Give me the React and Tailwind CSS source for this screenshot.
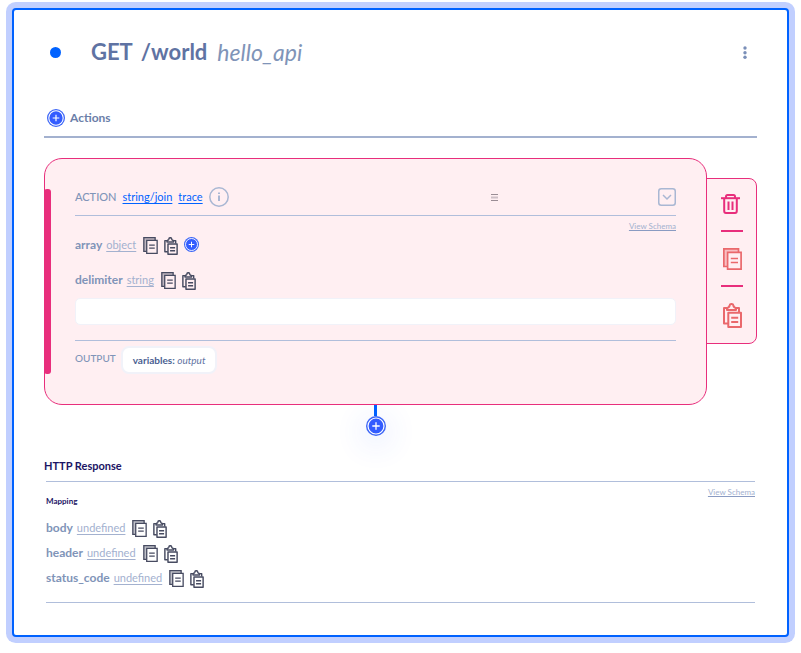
import React from "react";

function CopyIcon({ className }) {
  return (
    <svg viewBox="0 0 19 22" className={className} fill="none" stroke="currentColor" strokeWidth="1.700" aria-hidden="true">
      <path d="M4 18.500H1V1H15.500V4H4Z" fill="currentColor" fillOpacity="0.35" stroke="none" />
      <path d="M4 18.500H0.850V0.850H15.500V4" />
      <path d="M4.600 4.300H18.100V21.100H4.600Z" />
      <path d="M7.800 10.500H15M7.800 14.500H15" />
    </svg>
  );
}

function PasteIcon({ className }) {
  return (
    <svg viewBox="0 0 19 25" className={className} fill="none" stroke="currentColor" strokeWidth="2" strokeLinejoin="round" aria-hidden="true">
      <path d="M4 5H1V20.500H5M13 5H16V9" />
      <path d="M4 7V5.500C4 4.500 6.300 4.500 6.500 3C6.700 0.300 10.300 0.300 10.500 3C10.700 4.500 13 4.500 13 5.500V7Z" />
      <path d="M5.300 9.800H18V24H5.300Z" />
      <path d="M8.200 14.800H15.200M8.200 19H15.200" />
    </svg>
  );
}

function TrashIcon({ className }) {
  return (
    <svg viewBox="0 0 19 20" className={className} fill="none" stroke="currentColor" strokeWidth="2" aria-hidden="true">
      <path d="M0 4.200H19" />
      <path d="M5 4V2.500C5 1.500 5.500 1 6.500 1H12.500C13.500 1 14 1.500 14 2.500V4" />
      <path d="M3.200 4.200V17C3.200 18.300 4 19 5 19H14C15 19 15.800 18.300 15.800 17V4.200" />
      <path d="M7.500 7.500V16M11.500 7.500V16" />
    </svg>
  );
}

function PlusIcon({ className }) {
  return (
    <svg viewBox="0 0 20 20" className={className} aria-hidden="true">
      <circle cx="10" cy="10" r="10" fill="#3d66f6" />
      <circle cx="10" cy="10" r="8" fill="#335cff" stroke="#fff" strokeWidth="1.200" />
      <path d="M10 6.300V13.700M6.300 10H13.700" stroke="#fff" strokeWidth="1.300" />
    </svg>
  );
}

function CopyPaste({ name }) {
  return (
    <div className="ml-[3px] flex items-center gap-1.5 pt-0.5 text-[#474b61]">
      <button type="button" aria-label={`Copy ${name}`}>
        <CopyIcon className="h-[17px] w-[15px]" />
      </button>
      <button type="button" aria-label={`Paste ${name}`}>
        <PasteIcon className="h-[18px] w-[14px]" />
      </button>
    </div>
  );
}

function Field({ name, type, htmlFor, children }) {
  return (
    <div className="flex h-[25px] items-center gap-1 text-[11px] leading-4">
      {htmlFor ? (
        <label htmlFor={htmlFor} className="text-[12px] font-bold text-[#8094b8]">{name}</label>
      ) : (
        <span className="text-[12px] font-bold text-[#8094b8]">{name}</span>
      )}
      <a href="#type" className="text-[#a3b1cf] underline underline-offset-2 [text-decoration-skip-ink:none]">{type}</a>
      <CopyPaste name={name} />
      {children}
    </div>
  );
}

function ViewSchema() {
  return (
    <div className="flex h-5 items-center justify-end">
      <a href="#schema" className="text-[8px] leading-3 text-[#a3b1cf] underline decoration-[#8a9bc2] underline-offset-1 [text-decoration-skip-ink:none]">View Schema</a>
    </div>
  );
}

function ActionCard() {
  return (
    <section className="relative min-w-0 flex-1 rounded-[18px] border border-[#e82e7c] bg-[#ffeff2] px-[30px] pt-[27px] pb-[30px]">
      <div className="absolute top-[30px] bottom-[30px] -left-px w-[7px] rounded-[3px] bg-[#e82e7c]" />
      <header className="flex h-[30px] items-start border-b border-[#b0bedb]">
        <div className="flex h-[22px] flex-1 items-center gap-1.5 text-[11px] leading-4">
          <span className="font-medium text-[#8094b8]">ACTION</span>
          <a href="#join" className="text-[#0062ff] underline underline-offset-2 [text-decoration-skip-ink:none]">string/join</a>
          <a href="#trace" className="text-[#0062ff] underline underline-offset-2 [text-decoration-skip-ink:none]">trace</a>
          <button type="button" aria-label="Information">
            <svg viewBox="0 0 20 20" className="size-5" fill="none" stroke="#a9b7d3" strokeWidth="1.500" aria-hidden="true">
              <circle cx="10" cy="10" r="9.200" />
              <path d="M10 8.500V14M10 5.500V7" strokeWidth="2" />
            </svg>
          </button>
        </div>
        <button type="button" aria-label="Drag action" className="flex h-[22px] w-2 items-center">
          <svg viewBox="0 0 7 7" className="size-[7px]" aria-hidden="true">
            <path d="M0 0.500H7M0 6.500H7" stroke="#9a8d95" />
            <path d="M0 3.500H7" stroke="#cdbfc6" strokeWidth="2" />
          </svg>
        </button>
        <div className="flex h-[22px] basis-[177px] items-center justify-end">
          <button type="button" aria-label="Collapse action">
            <svg viewBox="0 0 18 18" className="size-[18px]" fill="none" stroke="#a9b7d3" strokeWidth="1.500" aria-hidden="true">
              <rect x="0.750" y="0.750" width="16.500" height="16.500" rx="2.500" />
              <path d="M5 7L9 11L13 7" />
            </svg>
          </button>
        </div>
      </header>
      <ViewSchema />
      <div className="-mt-1">
        <Field name="array" type="object">
          <button type="button" aria-label="Add array item" className="ml-0.5">
            <PlusIcon className="size-[15px]" />
          </button>
        </Field>
      </div>
      <div className="mt-2.5">
        <Field name="delimiter" type="string" htmlFor="delimiter" />
      </div>
      <input id="delimiter" type="text" className="mt-1.5 block h-[27px] w-full rounded-[5px] border border-[#f1f2f9] bg-white px-2 text-[11px] text-[#4a5c8a] outline-none" />
      <footer className="mt-[15px] flex items-start gap-[5px] border-t border-[#b0bedb] pt-[5px]">
        <span className="pt-1 text-[10px] leading-4 font-medium text-[#8094b8]">OUTPUT</span>
        <div className="rounded-lg border-2 border-[#f1f2f9] bg-white px-2.5 py-1 text-[10px] leading-4 text-[#5f73a3]">
          <span className="font-bold text-[#4a5f92]">variables:</span> <em>output</em>
        </div>
      </footer>
    </section>
  );
}

function ActionTools() {
  return (
    <aside className="mt-5 -ml-px flex h-[166px] w-[51px] flex-col items-center justify-between rounded-r-[8px] border border-[#e82e7c] bg-[#ffeff2] pt-[15px] pr-0.5 pb-[15px] text-[#ea686c]">
      <button type="button" aria-label="Delete action" className="text-[#e82e7c]">
        <TrashIcon className="h-5 w-[19px]" />
      </button>
      <div className="ml-0.5 h-0.5 w-[22px] bg-[#e82e7c]" />
      <button type="button" aria-label="Copy action" className="pl-1">
        <CopyIcon className="h-[22px] w-[19px]" />
      </button>
      <div className="ml-0.5 h-0.5 w-[22px] bg-[#e82e7c]" />
      <button type="button" aria-label="Paste action" className="pl-1">
        <PasteIcon className="h-[25px] w-[19px]" />
      </button>
    </aside>
  );
}

export default function App() {
  return (
    <div className="bg-white px-3 pt-2 pb-4 font-['Lato','Open_Sans',sans-serif]">
      <main className="rounded-[4px] border-2 border-[#0062ff] bg-white px-[30px] pt-6 pb-8 ring-[6px] ring-[#c1cfff]">
        <header className="flex h-9 items-center pr-[9px] pl-1.5">
          <span className="size-[11px] rounded-full bg-[#0062ff]" />
          <h1 className="ml-[30px] flex flex-1 gap-2 text-[22px] leading-9 font-bold text-[#5f73a3]">
            <span>GET</span>
            <span>/world</span>
            <em className="pl-0.5 text-[23px] font-normal text-[#8094b8]">hello_api</em>
          </h1>
          <button type="button" aria-label="More options">
            <svg viewBox="0 0 6 14" className="h-3.5 w-1.5" fill="#7a8fb8" aria-hidden="true">
              <circle cx="3" cy="3" r="1.700" />
              <circle cx="3" cy="7.700" r="1.700" />
              <circle cx="3" cy="12.300" r="1.700" />
            </svg>
          </button>
        </header>

        <div className="mt-9 flex h-8 items-start border-b-2 border-[#a3b1cf] pl-[3px]">
          <button type="button" className="flex h-6 items-center gap-[5px] text-[12px] font-bold text-[#6b7ea8]">
            <PlusIcon className="size-[18px]" />
            Actions
          </button>
        </div>

        <div className="mt-5 flex items-start">
          <ActionCard />
          <ActionTools />
        </div>

        <div className="mr-[50px] flex flex-col items-center">
          <div className="h-[11px] w-[3px] bg-[#0062ff]" />
          <button type="button" aria-label="Add action" className="rounded-full shadow-[0_6px_30px_4px_#335cff1f]">
            <PlusIcon className="size-5" />
          </button>
        </div>

        <section>
          <h2 className="mt-5 text-[11px] leading-5 font-bold text-[#1b1464]">HTTP Response</h2>
          <div className="mx-0.5 mt-[5px] border-y border-[#b0bedb] pb-3">
            <ViewSchema />
            <h3 className="-mt-2 mb-[7px] text-[8px] leading-[14px] font-bold text-[#1b1464]">Mapping</h3>
            <Field name="body" type="undefined" />
            <Field name="header" type="undefined" />
            <Field name="status_code" type="undefined" />
          </div>
        </section>
      </main>
    </div>
  );
}
